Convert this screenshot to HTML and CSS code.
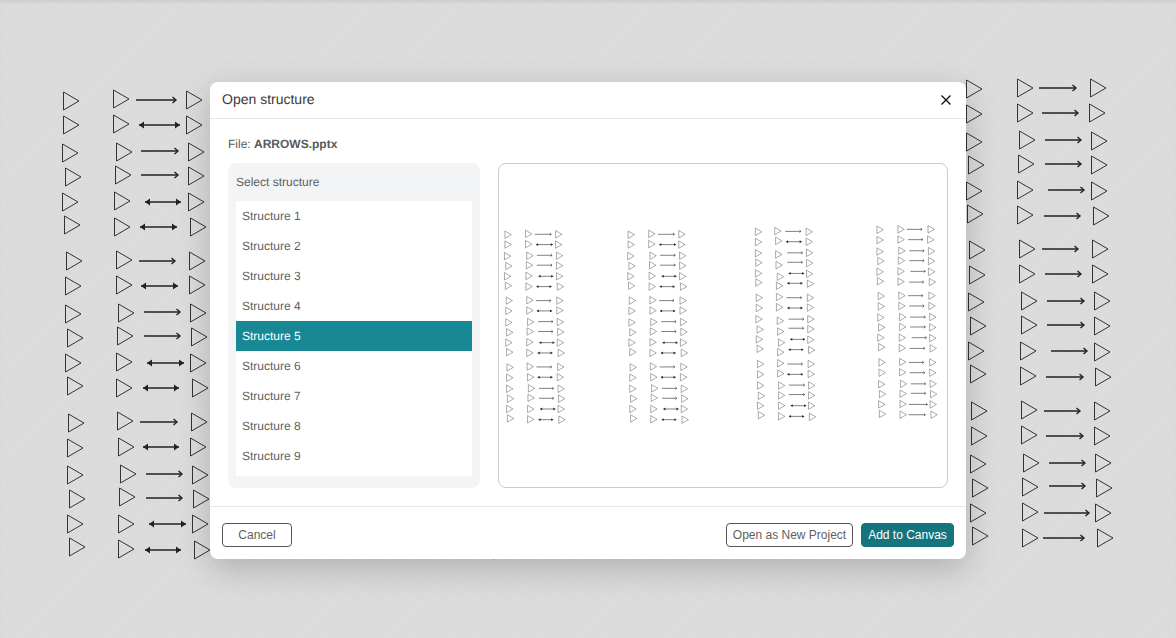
FILE: index.html
```html
<!DOCTYPE html>
<html lang="en">
<head>
    <meta charset="UTF-8">
    <meta name="viewport" content="width=device-width, initial-scale=1.0">
    <title>Open structure</title>
    <link rel="stylesheet" href="styles.css">
</head>
<body>

    <!-- Slide on the canvas behind the dialog -->
    <svg id="canvas" class="canvas" viewBox="0 0 1176 638"></svg>

    <div class="overlay">
        <div class="modal">
            <div class="modal-header">
                <span class="modal-title">Open structure</span>
                <button class="close-btn" aria-label="Close">
                    <svg width="12" height="12" viewBox="0 0 12 12"><path d="M1.5 1.5l9 9M10.5 1.5l-9 9"/></svg>
                </button>
            </div>

            <div class="modal-body">
                <p class="file-name">File: <b>ARROWS.pptx</b></p>
                <div class="columns">
                    <div class="picker">
                        <div class="picker-label">Select structure</div>
                        <ul class="structure-list">
                            <li>Structure 1</li>
                            <li>Structure 2</li>
                            <li>Structure 3</li>
                            <li>Structure 4</li>
                            <li class="selected">Structure 5</li>
                            <li>Structure 6</li>
                            <li>Structure 7</li>
                            <li>Structure 8</li>
                            <li>Structure 9</li>
                        </ul>
                    </div>
                    <div class="preview">
                        <!-- Same slide, scaled down -->
                        <svg id="thumb" class="thumb" viewBox="49.4 -70.6 1087 784"></svg>
                    </div>
                </div>
            </div>

            <div class="modal-footer">
                <button class="btn">Cancel</button>
                <div class="footer-right">
                    <button class="btn btn-wide">Open as New Project</button>
                    <button class="btn btn-primary">Add to Canvas</button>
                </div>
            </div>
        </div>
    </div>

    <script src="script.js"></script>
</body>
</html>
```

FILE: styles.css
```css
body {
    margin: 0;
    height: 100vh;
    overflow: hidden;
    font-family: 'Liberation Sans', Arial, sans-serif;
    text-rendering: geometricPrecision;
    background: repeating-linear-gradient(135deg, #dcdcdc 0, #dcdcdc 7px, #dadada 7px, #dadada 9px);
    box-shadow: inset 0 3px 3px -1px rgba(0, 0, 0, 0.07);
}

/* Slide drawing */
.canvas {
    position: absolute;
    top: 0;
    left: 0;
    width: 1176px;
    height: 638px;
}

.tri {
    fill: none;
    stroke: #333;
    stroke-width: 1;
}

.line {
    fill: none;
    stroke: #222;
    stroke-width: 1.4;
}

.head {
    fill: #222;
    stroke: none;
}

/* Dialog */
.overlay {
    position: absolute;
    top: 0;
    left: 0;
    right: 0;
    display: flex;
    justify-content: center;
    padding-top: 82px;
}

.modal {
    width: 756px;
    background-color: #fff;
    border-radius: 8px;
    box-shadow: 0 10px 32px rgba(0, 0, 0, 0.2);
}

.modal-header {
    display: flex;
    align-items: center;
    justify-content: space-between;
    height: 36px;
    padding: 0 14px 0 12px;
    border-bottom: 1px solid #e5e5ea;
}

.modal-title {
    margin-top: -2px;
    font-size: 14px;
    color: #3a3a3a;
}

.close-btn {
    display: flex;
    padding: 0;
    border: none;
    background: none;
    cursor: pointer;
}

.close-btn path {
    fill: none;
    stroke: #111;
    stroke-width: 1.4;
}

.modal-body {
    padding: 18px;
}

.file-name {
    margin: 0 0 12px;
    font-size: 12px;
    line-height: 14px;
    color: #5a5a5a;
}

.columns {
    display: flex;
    gap: 18px;
    height: 325px;
}

.picker {
    width: 252px;
    box-sizing: border-box;
    padding: 0 8px;
    background-color: #f3f4f6;
    border-radius: 8px;
}

.picker-label {
    height: 38px;
    line-height: 38px;
    font-size: 12px;
    color: #5f5f5f;
}

.structure-list {
    margin: 0;
    padding: 0 0 5px;
    list-style: none;
    background-color: #fff;
}

.structure-list li {
    height: 30px;
    line-height: 30px;
    padding: 0 6px;
    font-size: 12px;
    color: #5f5f5f;
    cursor: pointer;
}

.structure-list .selected {
    background-color: #178894;
    color: #fff;
}

.preview {
    flex: 1;
    border: 1px solid #c5cdd0;
    border-radius: 8px;
}

.thumb {
    display: block;
    width: 448px;
    height: 323px;
}

.modal-footer {
    display: flex;
    justify-content: space-between;
    padding: 16px 12px 12px;
    border-top: 1px solid #e5e5ea;
}

.footer-right {
    display: flex;
    gap: 8px;
}

.btn {
    box-sizing: border-box;
    width: 70px;
    height: 24px;
    padding: 0;
    font-family: inherit;
    font-size: 12px;
    color: #5f5f5f;
    background-color: #fff;
    border: 1px solid #555;
    border-radius: 4px;
    cursor: pointer;
}

.btn-wide {
    width: 127px;
}

.btn-primary {
    width: 93px;
    color: #fff;
    background-color: #15757f;
    border-color: #15757f;
}
```

FILE: script.js
```js
// Each row: triangle, triangle, arrow (x1, x2, y), triangle, arrow type (1 = one head, 2 = two heads)
var col1 = [
    [63, 101, 113, 99, 136, 176, 100, 186, 100, 1],
    [63, 125, 113, 124, 139, 180, 125, 186, 125, 2],
    [62, 153, 116, 152, 141, 178, 151, 188, 152, 1],
    [65, 177, 115, 175, 141, 178, 175, 188, 176, 1],
    [62, 202, 114, 201, 145, 181, 202, 188, 202, 2],
    [64, 225, 114, 227, 140, 177, 227, 190, 227, 2],
    [66, 261, 116, 260, 139, 175, 261, 189, 261, 1],
    [65, 286, 116, 285, 141, 178, 286, 189, 285, 2],
    [65, 314, 118, 313, 144, 180, 312, 190, 313, 1],
    [67, 338, 117, 336, 144, 180, 336, 191, 337, 1],
    [65, 363, 116, 362, 147, 184, 363, 190, 363, 2],
    [67, 386, 116, 388, 143, 179, 388, 192, 388, 2],
    [68, 423, 117, 421, 140, 177, 422, 191, 422, 1],
    [67, 448, 118, 447, 143, 179, 447, 190, 447, 2],
    [67, 475, 120, 474, 146, 182, 474, 192, 475, 1],
    [69, 499, 119, 497, 146, 182, 498, 193, 499, 1],
    [67, 524, 118, 524, 149, 186, 524, 192, 524, 2],
    [69, 547, 118, 549, 145, 181, 550, 194, 550, 2]
];

var col3 = [
    [671, 94, 718, 92, 744, 782, 93, 794, 94, 1],
    [671, 119, 720, 116, 746, 784, 118, 794, 118, 2],
    [671, 146, 720, 149, 749, 786, 145, 795, 145, 1],
    [672, 169, 721, 175, 749, 786, 168, 795, 170, 1],
    [671, 195, 724, 203, 752, 790, 195, 795, 196, 2],
    [672, 217, 722, 225, 749, 786, 219, 797, 220, 2],
    [673, 254, 722, 252, 747, 784, 254, 797, 254, 1],
    [673, 279, 722, 277, 749, 786, 279, 797, 278, 2],
    [672, 306, 724, 310, 752, 789, 306, 798, 306, 1],
    [675, 331, 725, 336, 752, 789, 328, 798, 330, 1],
    [673, 355, 727, 363, 756, 792, 355, 798, 356, 2],
    [675, 378, 725, 386, 752, 788, 380, 800, 381, 2],
    [676, 415, 725, 413, 749, 786, 415, 799, 415, 1],
    [676, 440, 725, 438, 749, 787, 440, 799, 439, 2],
    [676, 467, 727, 467, 753, 791, 466, 800, 467, 1],
    [678, 492, 727, 491, 753, 791, 489, 800, 491, 1],
    [676, 516, 727, 516, 757, 795, 516, 800, 516, 2],
    [678, 539, 727, 542, 753, 790, 542, 802, 543, 2]
];

var col4 = [
    [966, 89, 1017, 88, 1039, 1076, 88, 1090, 88, 1],
    [966, 114, 1017, 113, 1042, 1078, 113, 1089, 113, 1],
    [966, 142, 1019, 140, 1045, 1081, 140, 1091, 141, 1],
    [968, 165, 1018, 164, 1045, 1081, 164, 1091, 165, 1],
    [966, 191, 1017, 190, 1048, 1084, 190, 1091, 191, 1],
    [967, 214, 1017, 215, 1044, 1080, 216, 1093, 216, 1],
    [969, 250, 1019, 249, 1042, 1078, 249, 1092, 249, 1],
    [969, 275, 1019, 274, 1045, 1081, 274, 1092, 274, 1],
    [968, 302, 1021, 301, 1047, 1084, 301, 1094, 301, 1],
    [970, 326, 1021, 325, 1047, 1084, 325, 1094, 326, 1],
    [968, 351, 1020, 351, 1051, 1087, 351, 1094, 352, 1],
    [970, 374, 1020, 376, 1046, 1083, 377, 1095, 377, 1],
    [971, 411, 1021, 410, 1044, 1080, 411, 1094, 411, 1],
    [971, 436, 1021, 435, 1046, 1083, 436, 1094, 436, 1],
    [970, 464, 1023, 463, 1049, 1085, 463, 1095, 463, 1],
    [972, 488, 1022, 487, 1049, 1085, 486, 1096, 488, 1],
    [970, 513, 1022, 512, 1044, 1089, 513, 1095, 513, 1],
    [972, 536, 1022, 538, 1043, 1084, 538, 1097, 538, 1]
];

// x is the left edge as read from the reference, the stroke sits just inside it
function triangulo(x, y) {
    x += 0.5;
    return '<path class="tri" d="M' + x + ' ' + (y - 9) + 'L' + (x + 15.5) + ' ' + y + 'L' + x + ' ' + (y + 9) + 'Z"/>';
}

function seta(x1, x2, y, tipo) {
    var s = '<path class="line" d="M' + x1 + ' ' + y + 'H' + x2 + '"/>';
    if (tipo == 2) {
        s += '<path class="head" d="M' + x1 + ' ' + y + 'l5 -3.5v7Z"/>';
        s += '<path class="head" d="M' + x2 + ' ' + y + 'l-5 -3.5v7Z"/>';
    } else {
        s += '<path class="line" d="M' + (x2 - 3.5) + ' ' + (y - 3) + 'L' + x2 + ' ' + y + 'L' + (x2 - 3.5) + ' ' + (y + 3) + '"/>';
    }
    return s;
}

function desenhaColuna(linhas, dx) {
    var s = '';
    linhas.forEach(function (r) {
        s += triangulo(r[0] + dx, r[1]);
        s += triangulo(r[2] + dx, r[3]);
        s += seta(r[4] + dx, r[5] + dx, r[6], r[9]);
        s += triangulo(r[7] + dx, r[8]);
    });
    return s;
}

// Second column repeats the first one, shifted right
var slide = desenhaColuna(col1, 0) + desenhaColuna(col1, 299) + desenhaColuna(col3, 0) + desenhaColuna(col4, 0);

document.getElementById('canvas').innerHTML = slide;
document.getElementById('thumb').innerHTML = slide;
```
